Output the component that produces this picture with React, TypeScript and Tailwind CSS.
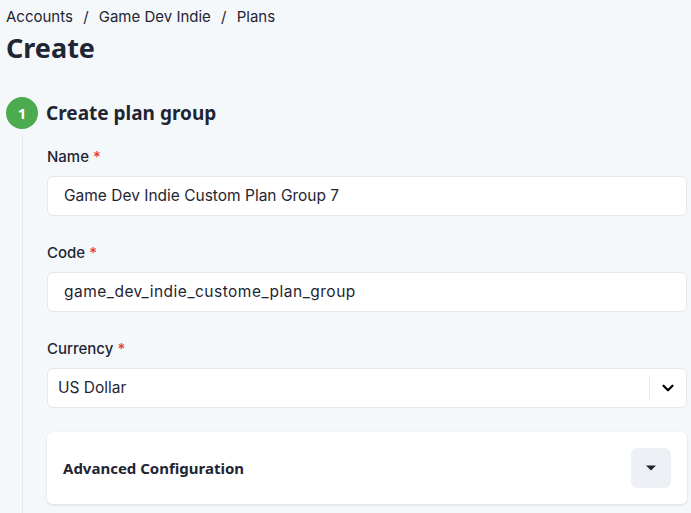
import { ChevronDown } from 'lucide-react'

const Label = ({ text }: { text: string }) => (
    <label className="block text-[15px] leading-[22px] font-medium text-[#1f2533] mb-[8px]">
        {text} <span className="text-[#e53e3e]">*</span>
    </label>
)

export default function App() {
    return (
        <div className="min-h-screen bg-[#f5f8fb] pl-[6px] pr-[4px] pt-[6px] text-[#1f2533]" style={{ fontFamily: 'Inter, "Noto Sans", sans-serif' }}>
            <nav className="text-[15px] leading-[22px] text-[#1f2533]">
                Accounts <span className="mx-[6px]">/</span> Game Dev Indie <span className="mx-[6px]">/</span> Plans
            </nav>
            <h1 className="mt-[2px] text-[27px] leading-[36px] font-bold" style={{ fontFamily: '"Noto Sans", sans-serif' }}>
                Create
            </h1>

            <div className="mt-[31px] flex items-center gap-[8px]">
                <div className="w-[32px] h-[32px] rounded-full bg-[#4caa4f] text-white flex items-center justify-center text-[15px] font-bold" style={{ fontFamily: '"Noto Sans", sans-serif' }}>
                    1
                </div>
                <h2 className="text-[19px] leading-[28px] font-bold" style={{ fontFamily: '"Noto Sans", sans-serif' }}>
                    Create plan group
                </h2>
            </div>

            <div className="mt-[6px] ml-[16px] border-l border-[#e3e8ef] pl-[24px] pt-[11px] pb-[10px]">
                <Label text="Name" />
                <div className="h-[40px] bg-white border border-[#e3e8ef] rounded-[6px] flex items-center px-[16px] text-[15.5px]">
                    Game Dev Indie Custom Plan Group 7
                </div>

                <div className="mt-[26px]">
                    <Label text="Code" />
                    <div className="h-[40px] bg-white border border-[#e3e8ef] rounded-[6px] flex items-center px-[16px] text-[15.5px] tracking-[0.5px]">
                        game_dev_indie_custome_plan_group
                    </div>
                </div>

                <div className="mt-[26px]">
                    <Label text="Currency" />
                    <div className="h-[40px] bg-white border border-[#e3e8ef] rounded-[6px] flex items-center pl-[10px] text-[15.5px]">
                        <span className="flex-1">US Dollar</span>
                        <span className="w-px h-[22px] bg-[#e3e8ef]" />
                        <span className="w-[36px] flex items-center justify-center">
                            <ChevronDown className="w-[18px] h-[18px] text-black" strokeWidth={3} />
                        </span>
                    </div>
                </div>

                <div className="mt-[24px] h-[72px] bg-white rounded-[6px] shadow-[0_1px_3px_rgba(0,0,0,0.12)] flex items-center justify-between pl-[16px] pr-[16px]">
                    <span className="text-[15px] font-bold" style={{ fontFamily: '"Noto Sans", sans-serif' }}>
                        Advanced Configuration
                    </span>
                    <button className="w-[40px] h-[40px] rounded-[6px] bg-[#edf1f6] flex items-center justify-center">
                        <svg width="12" height="8" viewBox="0 0 12 8">
                            <path d="M1 1.5h10L6 6.5z" fill="#1f2533" />
                        </svg>
                    </button>
                </div>
            </div>
        </div>
    )
}
